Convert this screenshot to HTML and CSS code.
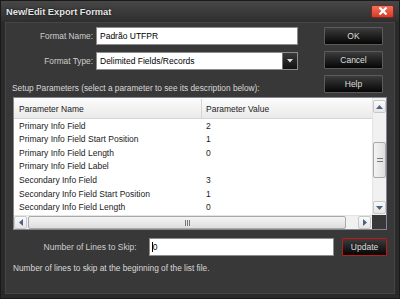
FILE: index.html
```html
<!DOCTYPE html>
<html lang="en">
<head>
    <meta charset="UTF-8">
    <title>New/Edit Export Format</title>
    <link rel="stylesheet" href="styles.css">
</head>
<body>
    <div class="window">
        <div class="titlebar">
            <span class="title">New/Edit Export Format</span>
            <button class="close-button" title="Close">
                <svg width="10" height="8" viewBox="0 0 10 8"><path d="M1.5 0.5 L8.5 7.5 M8.5 0.5 L1.5 7.5" stroke="#fff" stroke-width="2.2"/></svg>
            </button>
        </div>
        <div class="client">
            <div class="top">
                <div class="fields">
                    <label class="field-label">Format Name:</label>
                    <div class="text-input">Padrão UTFPR</div>
                    <label class="field-label">Format Type:</label>
                    <div class="text-input select">
                        <span>Delimited Fields/Records</span>
                        <span class="drop-button">
                            <svg width="6" height="4" viewBox="0 0 6 4"><path d="M0 0 H6 L3 3.5 Z" fill="#ddd"/></svg>
                        </span>
                    </div>
                    <div class="setup-label">Setup Parameters (select a parameter to see its description below):</div>
                </div>
                <div class="buttons">
                    <button class="dlg-button">OK</button>
                    <button class="dlg-button">Cancel</button>
                    <button class="dlg-button">Help</button>
                </div>
            </div>

            <div class="list">
                <div class="list-body">
                    <div class="list-header">
                        <div class="col-name">Parameter Name</div>
                        <div class="col-value">Parameter Value</div>
                    </div>
                    <div class="list-row"><div class="col-name">Primary Info Field</div><div class="col-value">2</div></div>
                    <div class="list-row"><div class="col-name">Primary Info Field Start Position</div><div class="col-value">1</div></div>
                    <div class="list-row"><div class="col-name">Primary Info Field Length</div><div class="col-value">0</div></div>
                    <div class="list-row"><div class="col-name">Primary Info Field Label</div><div class="col-value"></div></div>
                    <div class="list-row"><div class="col-name">Secondary Info Field</div><div class="col-value">3</div></div>
                    <div class="list-row"><div class="col-name">Secondary Info Field Start Position</div><div class="col-value">1</div></div>
                    <div class="list-row"><div class="col-name">Secondary Info Field Length</div><div class="col-value">0</div></div>
                </div>
                <div class="vscroll">
                    <div class="scroll-btn">
                        <svg width="7" height="4" viewBox="0 0 7 4"><path d="M0 4 H7 L3.5 0 Z" fill="#4d6185"/></svg>
                    </div>
                    <div class="scroll-thumb vthumb"><span class="grip-h"></span></div>
                    <div class="scroll-btn down">
                        <svg width="7" height="4" viewBox="0 0 7 4"><path d="M0 0 H7 L3.5 4 Z" fill="#4d6185"/></svg>
                    </div>
                </div>
                <div class="hscroll">
                    <div class="scroll-btn">
                        <svg width="4" height="7" viewBox="0 0 4 7"><path d="M4 0 V7 L0 3.5 Z" fill="#4d6185"/></svg>
                    </div>
                    <div class="scroll-thumb hthumb"><span class="grip-v"></span></div>
                    <div class="scroll-btn right">
                        <svg width="4" height="7" viewBox="0 0 4 7"><path d="M0 0 V7 L4 3.5 Z" fill="#4d6185"/></svg>
                    </div>
                </div>
                <div class="corner"></div>
            </div>

            <div class="skip-row">
                <label class="skip-label">Number of Lines to Skip:</label>
                <div class="text-input skip-input"><span class="caret">0</span></div>
                <button class="dlg-button update">Update</button>
            </div>
            <div class="description">Number of lines to skip at the beginning of the list file.</div>
        </div>
    </div>
</body>
</html>
```

FILE: styles.css
```css
:root {
    --frame: #2a2a2a;
    --client: #383838;
    --text: #d8d8d8;
    --list-border: #828790;
    --arrow: #4d6185;
}

body {
    margin: 0;
    background: #1e1e1e;
    font-family: 'Liberation Sans', Arial, sans-serif;
    font-size: 8.3px;
    color: var(--text);
}

.window {
    width: 400px;
    height: 299px;
    box-sizing: border-box;
    background: var(--frame);
    border: 1px solid #1a1a1a;
    display: flex;
    flex-direction: column;
    padding: 0 4px 4px 4px;
}

.titlebar {
    height: 21px;
    display: flex;
    align-items: center;
    justify-content: space-between;
    background: linear-gradient(#474747, #2e2e2e);
    margin: 0 -4px;
    padding: 0 5px 0 5px;
}

.title {
    font-size: 9.3px;
    font-weight: bold;
    color: #e6e6e6;
    text-shadow: 0 0 2px #000;
}

.close-button {
    width: 23px;
    height: 13px;
    margin-top: -1px;
    padding: 0;
    border: 1px solid #7a2a20;
    border-radius: 2px;
    background: linear-gradient(#f0735e, #d83a24);
    display: flex;
    align-items: center;
    justify-content: center;
}

.client {
    flex: 1;
    background: var(--client);
    border: 1px solid #464646;
    padding: 4px 7px 0 7px;
    display: flex;
    flex-direction: column;
}

.top {
    display: flex;
}

.fields {
    display: grid;
    grid-template-columns: 80px 202px;
    column-gap: 3px;
    row-gap: 6px;
    align-items: center;
}

.field-label {
    text-align: right;
    color: #cfcfcf;
}

.text-input {
    height: 18px;
    box-sizing: border-box;
    background: #fff;
    border: 1px solid #8c8c8c;
    color: #000;
    font-size: 8.5px;
    padding: 0 3px;
    display: flex;
    align-items: center;
}

.select {
    justify-content: space-between;
    padding-right: 0;
}

.drop-button {
    width: 14px;
    height: 16px;
    background: linear-gradient(#3a3a3a, #111);
    border-left: 1px solid #777;
    display: flex;
    align-items: center;
    justify-content: center;
}

.setup-label {
    grid-column: 1 / 3;
    margin-left: -1px;
    margin-top: 6px;
    white-space: nowrap;
}

.buttons {
    display: flex;
    flex-direction: column;
    gap: 6px;
    margin-left: 26px;
}

.dlg-button {
    width: 59px;
    height: 18px;
    padding: 0;
    font-family: inherit;
    font-size: 8.5px;
    color: #dedede;
    background: linear-gradient(#3c3c3c, #050505);
    border: 1px solid #5c5c5c;
    border-radius: 1px;
}

.list {
    margin-top: 4px;
    height: 133px;
    box-sizing: border-box;
    border: 1px solid var(--list-border);
    background: #fff;
    display: grid;
    grid-template-columns: 1fr 14px;
    grid-template-rows: 1fr 14px;
    color: #1a1a1a;
    font-size: 8.5px;
}

.list-body {
    overflow: hidden;
}

.list-header {
    height: 20px;
    box-sizing: border-box;
    display: flex;
    align-items: center;
    background: linear-gradient(#fbfbfb, #eaeaea);
    border-bottom: 1px solid #d5d5d5;
    margin-top: 1px;
}

.list-header .col-name {
    border-right: 1px solid #d5d5d5;
    height: 100%;
    display: flex;
    align-items: center;
}

.list-row {
    height: 13.55px;
    display: flex;
    align-items: center;
}

.col-name {
    width: 188px;
    padding-left: 5px;
    box-sizing: border-box;
    white-space: nowrap;
}

.col-value {
    padding-left: 4px;
}

.vscroll {
    background: #f1f1f1;
    display: flex;
    flex-direction: column;
    padding: 2px 0 1px 0;
    border-left: 1px solid #e4e4e4;
}

.hscroll {
    background: #f1f1f1;
    display: flex;
    align-items: center;
    border-top: 1px solid #e4e4e4;
}

.scroll-btn {
    width: 13px;
    height: 13px;
    box-sizing: border-box;
    border: 1px solid #c8c8c8;
    border-radius: 2px;
    background: linear-gradient(#fafafa, #e6e6e6);
    display: flex;
    align-items: center;
    justify-content: center;
}

.scroll-btn.down {
    margin-top: auto;
}

.scroll-btn.right {
    margin-left: auto;
    margin-right: 1px;
}

.scroll-thumb {
    box-sizing: border-box;
    border: 1px solid #a9a9a9;
    border-radius: 2px;
    background: linear-gradient(90deg, #f4f4f4, #dedede);
    display: flex;
    align-items: center;
    justify-content: center;
}

.vthumb {
    height: 36px;
    margin-top: 29px;
}

.hthumb {
    width: 318px;
    height: 13px;
    margin-left: 1px;
    background: linear-gradient(#f4f4f4, #dedede);
}

.grip-h {
    width: 6px;
    height: 4px;
    border-top: 1px solid #777;
    border-bottom: 1px solid #777;
    box-sizing: border-box;
}

.grip-v {
    width: 5px;
    height: 6px;
    border-left: 1px solid #777;
    border-right: 1px solid #777;
    box-sizing: border-box;
    position: relative;
}

.grip-v::after {
    content: '';
    position: absolute;
    left: 1px;
    top: 0;
    width: 1px;
    height: 6px;
    background: #777;
}

.corner {
    background: var(--client);
}

.skip-row {
    display: flex;
    align-items: center;
    margin-top: 8px;
}

.skip-label {
    width: 124px;
    text-align: right;
    color: #cfcfcf;
    font-size: 8.5px;
}

.skip-input {
    width: 186px;
    margin-left: 12px;
}

.caret {
    border-left: 1px solid #000;
    padding-left: 0;
    margin-left: -1px;
}

.update {
    margin-left: 8px;
    width: 45px;
    border: 1px solid #c01818;
}

.description {
    margin-top: 7px;
    white-space: nowrap;
}
```
